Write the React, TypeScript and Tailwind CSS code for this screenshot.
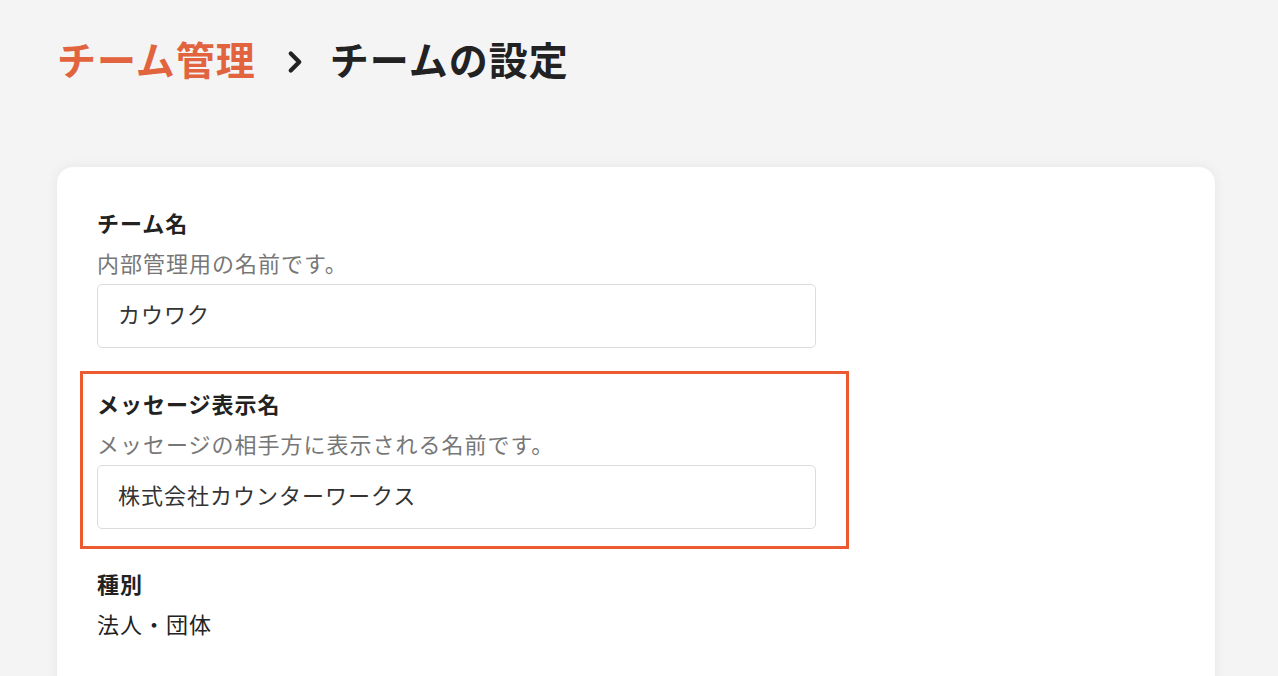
import { ChevronRight } from "lucide-react";

const font = { fontFamily: '"Noto Sans CJK JP", "Noto Sans", sans-serif' };

function Field({ label, hint, value }: { label: string; hint: string; value: string }) {
  return (
    <div>
      <div className="text-[22px] leading-[30px] font-bold tracking-[1px] text-[#222]">{label}</div>
      <div className="mt-[10px] text-[22px] leading-[30px] tracking-[1px] text-[#777]">{hint}</div>
      <div className="mt-[7px] h-[64px] rounded-[5px] border border-[#dcdcdc] bg-white flex items-center px-[20px] pb-[6px]">
        <span className="text-[22px] tracking-[1px] text-[#333]">{value}</span>
      </div>
    </div>
  );
}

export default function App() {
  return (
    <div className="min-h-screen bg-[#f4f4f4] pl-[57px] pr-[63px] pt-[31px]" style={font}>
      {/* breadcrumb */}
      <div className="flex items-center h-[54px]">
        <span className="text-[39px] font-bold tracking-[1px] text-[#e1643f]">チーム管理</span>
        <ChevronRight className="ml-[22px] mr-[18px] mt-[8px] h-[34px] w-[34px] text-[#222]" strokeWidth={3} />
        <span className="text-[39px] font-bold tracking-[1px] text-[#222]">チームの設定</span>
      </div>

      {/* card */}
      <div className="mt-[82px] rounded-2xl bg-white shadow-[0_0_14px_rgba(0,0,0,0.06)] pl-[40px] pt-[40px] pb-[80px]">
        <div className="w-[719px]">
          <Field label="チーム名" hint="内部管理用の名前です。" value="カウワク" />

          <div className="mt-[23px] -ml-[17px] -mr-[33px] border-[3px] border-[#ec5a2f] pl-[14px] pr-[30px] pt-[14px] pb-[17px]">
            <Field
              label="メッセージ表示名"
              hint="メッセージの相手方に表示される名前です。"
              value="株式会社カウンターワークス"
            />
          </div>

          <div className="mt-[19px] text-[22px] leading-[30px] font-bold tracking-[1px] text-[#222]">種別</div>
          <div className="mt-[10px] text-[22px] leading-[30px] tracking-[1px] text-[#222]">法人・団体</div>
        </div>
      </div>
    </div>
  );
}
